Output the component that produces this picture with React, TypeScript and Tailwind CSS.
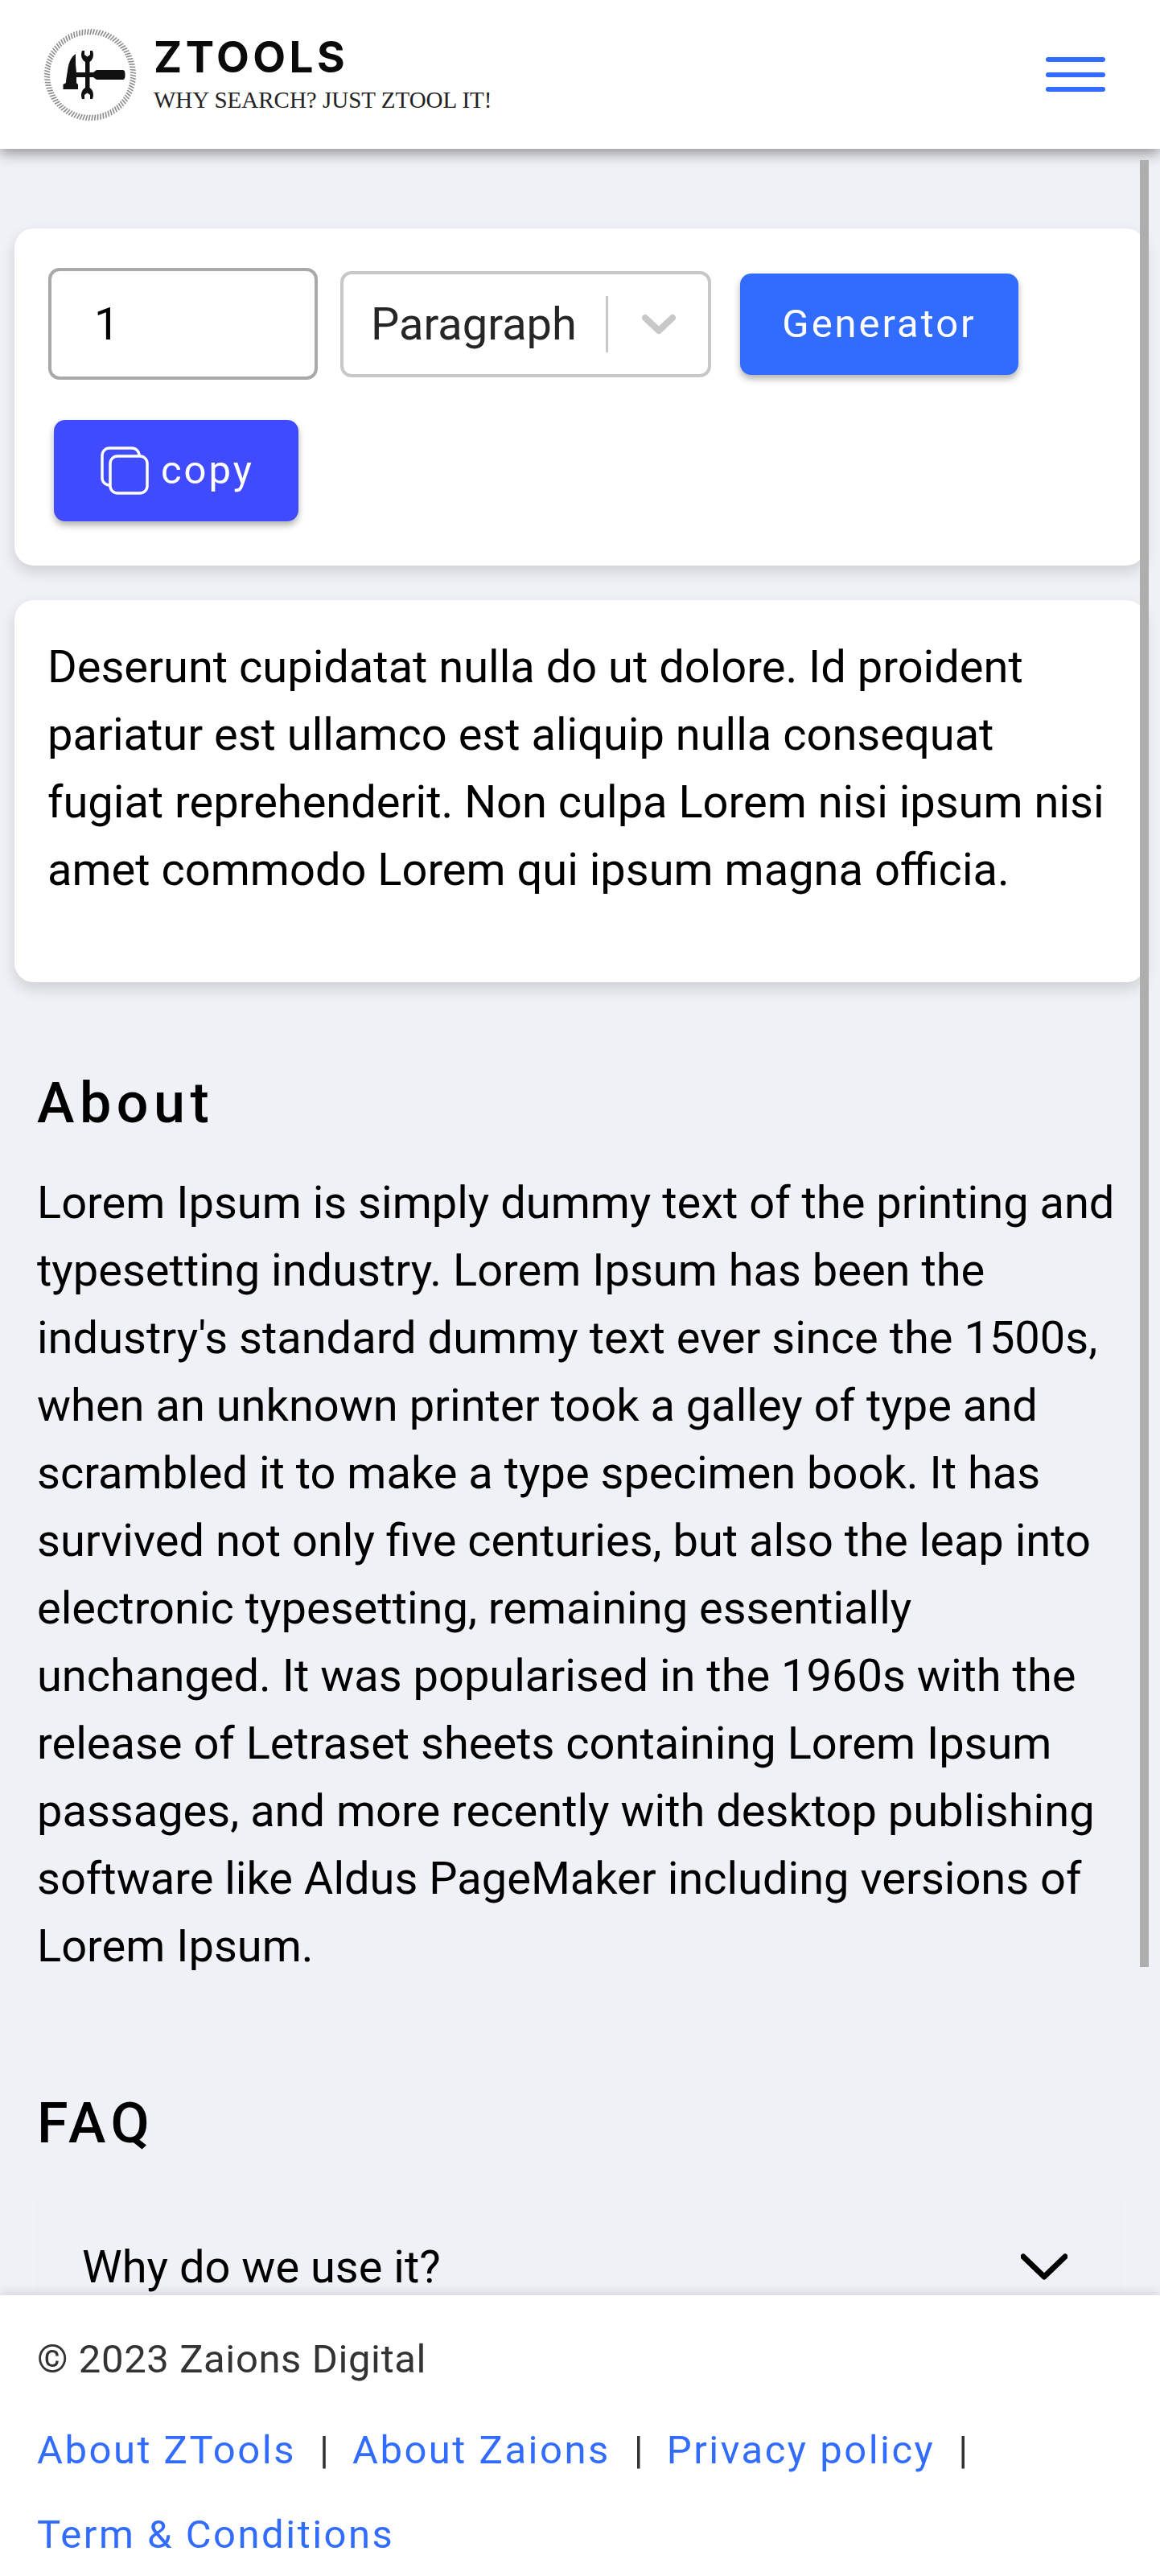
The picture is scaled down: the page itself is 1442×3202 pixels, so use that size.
const ticks = Array.from({ length: 96 }, (_, i) => (i * Math.PI * 2) / 96);

function Logo() {
  return (
    <svg width="140" height="140" viewBox="0 0 140 140" className="shrink-0">
      {ticks.map((a, i) => (
        <line
          key={i}
          x1={72 + 50 * Math.cos(a)}
          y1={73 + 50 * Math.sin(a)}
          x2={72 + 57 * Math.cos(a + 0.03)}
          y2={73 + 57 * Math.sin(a + 0.03)}
          stroke="#8b8b8b"
          strokeWidth="1.6"
        />
      ))}
      <path
        d="M54 47 C47 52 45 60 44 68 C43 74 42 79 42 83 L38.500 85 L38.500 91 L57 91 L57 85 L55 83 L55 76 L76 76 L80 79 L112 79 C115 79 115.500 77 115.500 73 C115.500 69 115 67 112 67 L80 67 L76 70 L55 70 L54 60 Z"
        fill="#111"
      />
      <path
        d="M62 43 C60 48 61 54 66 57 L66 89 C61 92 60 98 62 103 L65 103 L65 98 L68.500 95.500 L72 98 L72 103 L75 103 C77 98 76 92 71.500 89 L71.500 57 C76 54 77 48 75 43 L72 43 L72 48 L68.500 50.500 L65 48 L65 43 Z"
        fill="#111"
      />
    </svg>
  );
}

function Separator() {
  return <span className="text-[#333] mx-[29px] tracking-normal">|</span>;
}

export default function App() {
  return (
    <div className="relative w-[1442px] h-[3202px] overflow-hidden flex flex-col bg-[#f0f1f6] font-['Roboto',sans-serif] text-black">
      <header className="relative z-10 h-[185px] shrink-0 bg-white shadow-[0_6px_16px_rgba(0,0,0,0.38)] flex items-center">
        <div className="ml-[40px] -mt-[26px] flex items-start pt-[20px]">
          <Logo />
          <div className="ml-[11px] mt-[20px] flex flex-col">
            <span className="font-['Inter',sans-serif] font-bold text-[53px] leading-[62px] tracking-[4.500px] text-[#0a0a0a]">
              ZTOOLS
            </span>
            <span className="font-['Liberation_Serif',serif] text-[29px] leading-[30px] mt-[7px] text-[#222] whitespace-nowrap">
              WHY SEARCH? JUST ZTOOL IT!
            </span>
          </div>
        </div>
        <button className="absolute left-[1300px] top-[71px] w-[74px] flex flex-col gap-[12.500px]" aria-label="Menu">
          <span className="block h-[6px] rounded-full bg-[#316cff]" />
          <span className="block h-[6px] rounded-full bg-[#316cff]" />
          <span className="block h-[6px] rounded-full bg-[#316cff]" />
        </button>
      </header>

      <main className="flex-1 min-h-0 overflow-hidden pt-[99px]">
        <section className="mx-[18px] h-[419px] bg-white rounded-[24px] shadow-[0_8px_18px_rgba(0,0,0,0.14)] pt-[49px] pl-[42px]">
          <div className="flex items-center h-[139px]">
            <div className="w-[335px] h-[139px] border-[4px] border-[#a9a9a9] rounded-[14px] flex items-center pl-[53px] text-[56px]">
              1
            </div>
            <div className="ml-[28px] w-[461px] h-[132px] border-[4px] border-[#c8c8c8] rounded-[14px] flex items-center pl-[34px] text-[56px] text-[#262626]">
              <span>Paragraph</span>
              <span className="ml-[36px] w-[3px] h-[70px] bg-[#c8c8c8]" />
              <svg width="42" height="26" viewBox="0 0 42 26" className="ml-[42px]">
                <path d="M4 5 L21 21 L38 5" fill="none" stroke="#c8c8c8" strokeWidth="8" strokeLinecap="round" strokeLinejoin="round" />
              </svg>
            </div>
            <button className="ml-[36px] w-[346px] h-[126px] rounded-[14px] bg-[#316cff] text-white text-[49px] tracking-[2.940px] shadow-[0_5px_8px_rgba(0,0,0,0.3)]">
              Generator
            </button>
          </div>
          <button className="mt-[50px] ml-[7px] w-[304px] h-[126px] rounded-[14px] bg-[#404bff] text-white text-[49px] tracking-[2.940px] shadow-[0_5px_8px_rgba(0,0,0,0.3)] flex items-center pl-[58px]">
            <svg width="60" height="60" viewBox="0 0 60 60" className="shrink-0">
              <rect x="2" y="2" width="46" height="46" rx="9" fill="none" stroke="#fff" strokeWidth="3.500" />
              <rect x="12" y="12" width="46" height="46" rx="9" fill="#404bff" stroke="#fff" strokeWidth="3.500" />
            </svg>
            <span className="ml-[15px]">copy</span>
          </button>
        </section>

        <section className="mt-[43px] mx-[18px] h-[475px] bg-white rounded-[24px] shadow-[0_8px_18px_rgba(0,0,0,0.14)] pt-[41px] pl-[41px] pr-[42px] text-[56px] leading-[84px]">
          Deserunt cupidatat nulla do ut dolore. Id proident pariatur est ullamco est aliquip nulla consequat fugiat reprehenderit. Non culpa Lorem nisi ipsum nisi amet commodo Lorem qui ipsum magna officia.
        </section>

        <section className="mt-[108px] px-[46px]">
          <h2 className="text-[70px] leading-[84px] font-medium tracking-[6.500px]">About</h2>
          <p className="mt-[40px] text-[56px] leading-[84px] w-[1350px]">
            Lorem Ipsum is simply dummy text of the printing and typesetting industry. Lorem Ipsum has been the industry's standard dummy text ever since the 1500s, when an unknown printer took a galley of type and scrambled it to make a type specimen book. It has survived not only five centuries, but also the leap into electronic typesetting, remaining essentially unchanged. It was popularised in the 1960s with the release of Letraset sheets containing Lorem Ipsum passages, and more recently with desktop publishing software like Aldus PageMaker including versions of Lorem Ipsum.
          </p>
        </section>

        <section className="mt-[136px] px-[46px]">
          <h2 className="text-[70px] leading-[84px] font-medium tracking-[6.500px]">FAQ</h2>
          <div className="mt-[50px] w-[1348px] border-t border-x border-[#eceef3] pt-[44px] pl-[55px] pr-[66px] flex items-center justify-between">
            <span className="text-[56px] leading-[84px]">Why do we use it?</span>
            <svg width="58" height="34" viewBox="0 0 58 34">
              <path d="M3 4 L29 29 L55 4" fill="none" stroke="#000" strokeWidth="7" strokeLinecap="round" strokeLinejoin="round" />
            </svg>
          </div>
        </section>
      </main>

      <footer className="relative z-10 h-[349px] shrink-0 bg-white shadow-[0_-3px_12px_rgba(0,0,0,0.12)] pt-[52px] px-[46px] text-[49px] leading-[56px]">
        <div className="text-[#333] tracking-[0.600px]">© 2023 Zaions Digital</div>
        <div className="mt-[32px] text-[#316cff] leading-[105px] tracking-[2.500px]">
          <a>About ZTools</a>
          <Separator />
          <a>About Zaions</a>
          <Separator />
          <a>Privacy policy</a>
          <Separator />
          <br />
          <a>Term &amp; Conditions</a>
        </div>
      </footer>

      <div className="absolute z-20 left-[1417px] top-[199px] w-[11px] h-[2246px] bg-[#aeaeae]" />
    </div>
  );
}
